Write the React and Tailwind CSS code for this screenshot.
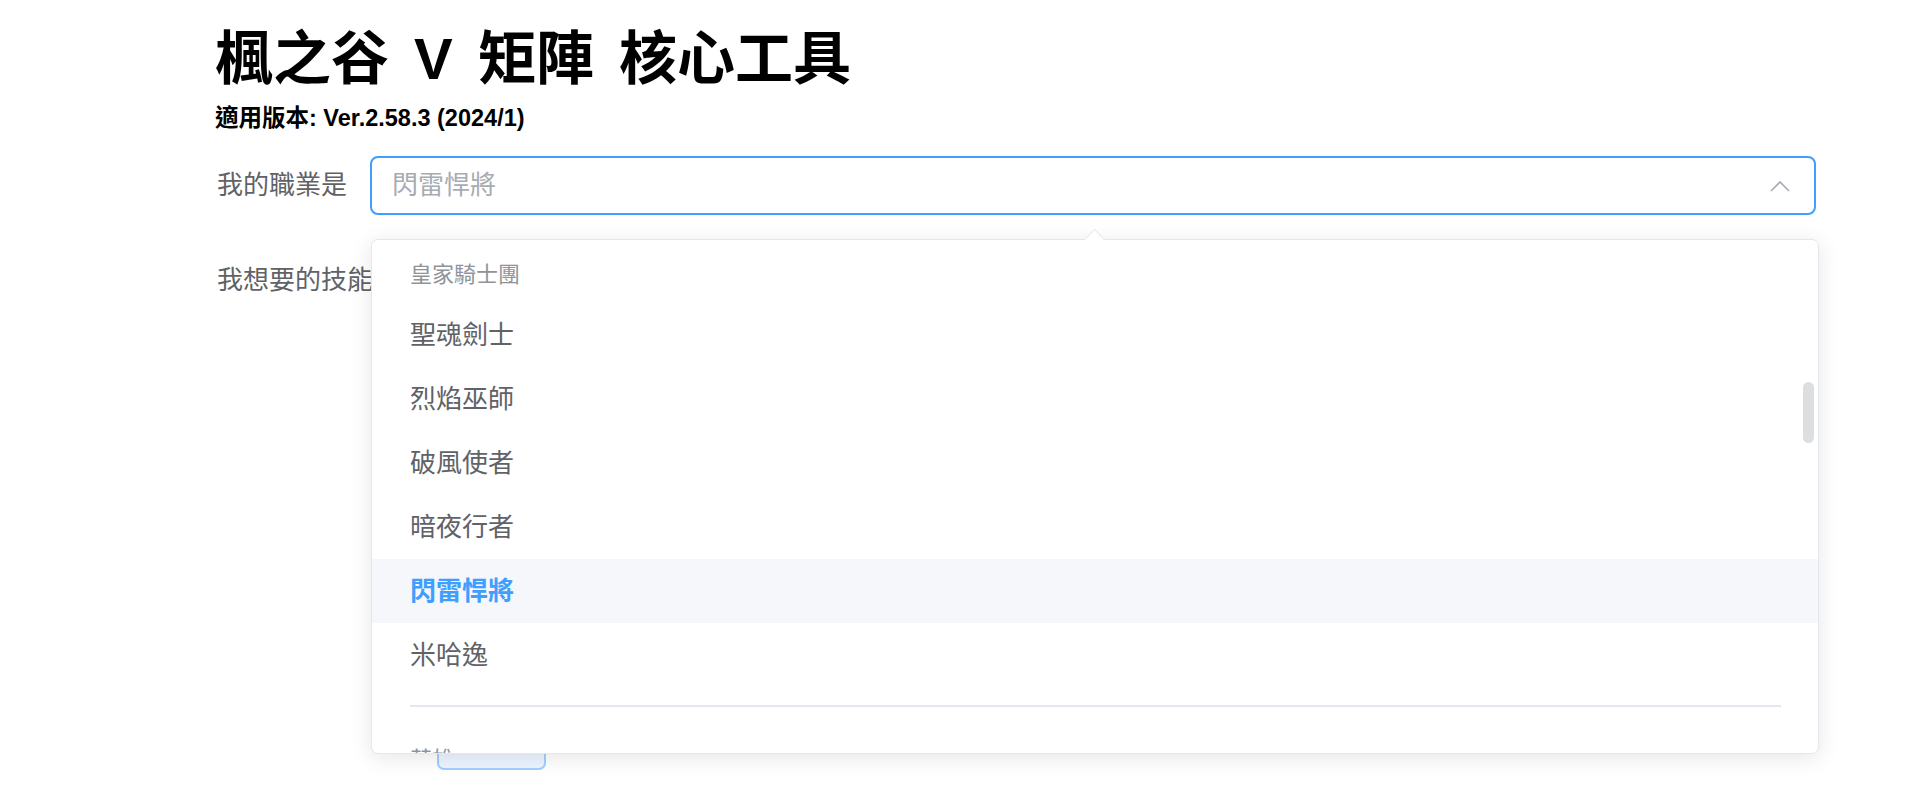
import { useState } from 'react'

const FONT = { fontFamily: '"Liberation Sans", "Noto Sans CJK TC", sans-serif' }

const GROUPS = [
  {
    title: '皇家騎士團',
    items: ['聖魂劍士', '烈焰巫師', '破風使者', '暗夜行者', '閃雷悍將', '米哈逸'],
  },
  {
    title: '英雄',
    items: ['狂狼勇士', '龍魔導士', '夜光', '精靈遊俠', '幻影俠盜', '隱月'],
  },
]

function ChevronUp() {
  return (
    <svg width="20" height="12" viewBox="0 0 20 12" fill="none">
      <path d="M1 11 L10 2 L19 11" stroke="#a8abb2" strokeWidth="1.6" />
    </svg>
  )
}

function Dropdown({ selected }) {
  return (
    <div className="absolute left-[1px] right-[-3px] top-[83px] z-10 h-[515px] rounded-[7px] border border-[#e4e7ed] bg-white shadow-[0_4px_22px_rgba(0,0,0,0.1)]">
      {/* popper arrow */}
      <div className="absolute left-[715px] top-[-8px] h-[15px] w-[15px] rotate-45 border-l border-t border-[#e4e7ed] bg-white" />
      <div className="h-full overflow-hidden rounded-[7px] pt-[7px]">
        {GROUPS.map((g) => (
          <div key={g.title} className="relative pb-[45px]">
            <div className="h-[56px] pl-[38px] text-[22px] leading-[56px] text-[#909399]">{g.title}</div>
            {g.items.map((item) => {
              const active = item === selected
              return (
                <div
                  key={item}
                  className={
                    active
                      ? 'h-[64px] bg-[#f5f7fa] px-[38px] text-[26px] font-bold leading-[64px] text-[#409eff]'
                      : 'h-[64px] px-[38px] text-[26px] leading-[64px] text-[#606266]'
                  }
                >
                  {item}
                </div>
              )
            })}
            <div className="absolute bottom-[25px] left-[38px] right-[37px] h-[2px] bg-[#e4e7ed]" />
          </div>
        ))}
      </div>
      {/* scrollbar */}
      <div className="absolute right-[4px] top-[142px] h-[61px] w-[11px] rounded-full bg-[#dddee0]" />
    </div>
  )
}

export default function App() {
  const [job] = useState('閃雷悍將')

  return (
    <div className="min-h-[790px] bg-white pl-[215px] pr-[104px] pt-[20px]" style={FONT}>
      <h1 className="text-[58px] font-bold leading-[78px] text-black [word-spacing:9px]">楓之谷 V 矩陣 核心工具</h1>
      <p className="mt-[6px] text-[23.5px] font-bold leading-[28px] text-black">適用版本: Ver.2.58.3 (2024/1)</p>

      <div className="mt-[24px] flex items-center">
        <label className="w-[155px] shrink-0 pl-[2px] text-[26px] text-[#606266]">我的職業是</label>
        <div className="relative flex-1">
          <div className="flex h-[59px] items-center justify-between rounded-[8px] border-2 border-[#409eff] pl-[20px] pr-[24px]">
            <span className="text-[26px] text-[#a8abb2]">{job}</span>
            <ChevronUp />
          </div>
          <Dropdown selected={job} />
        </div>
      </div>

      <div className="mt-[36px] flex">
        <label className="w-[155px] shrink-0 whitespace-nowrap pl-[2px] text-[26px] leading-[58px] text-[#606266]">
          我想要的技能
        </label>
        <div className="flex flex-1 flex-col pt-[463px]">
          <button className="ml-[67px] h-[56px] w-[109px] rounded-[7px] border-2 border-[#a0cfff] bg-[#ecf5ff] text-[24px] text-[#409eff]">
            計算
          </button>
        </div>
      </div>
    </div>
  )
}
